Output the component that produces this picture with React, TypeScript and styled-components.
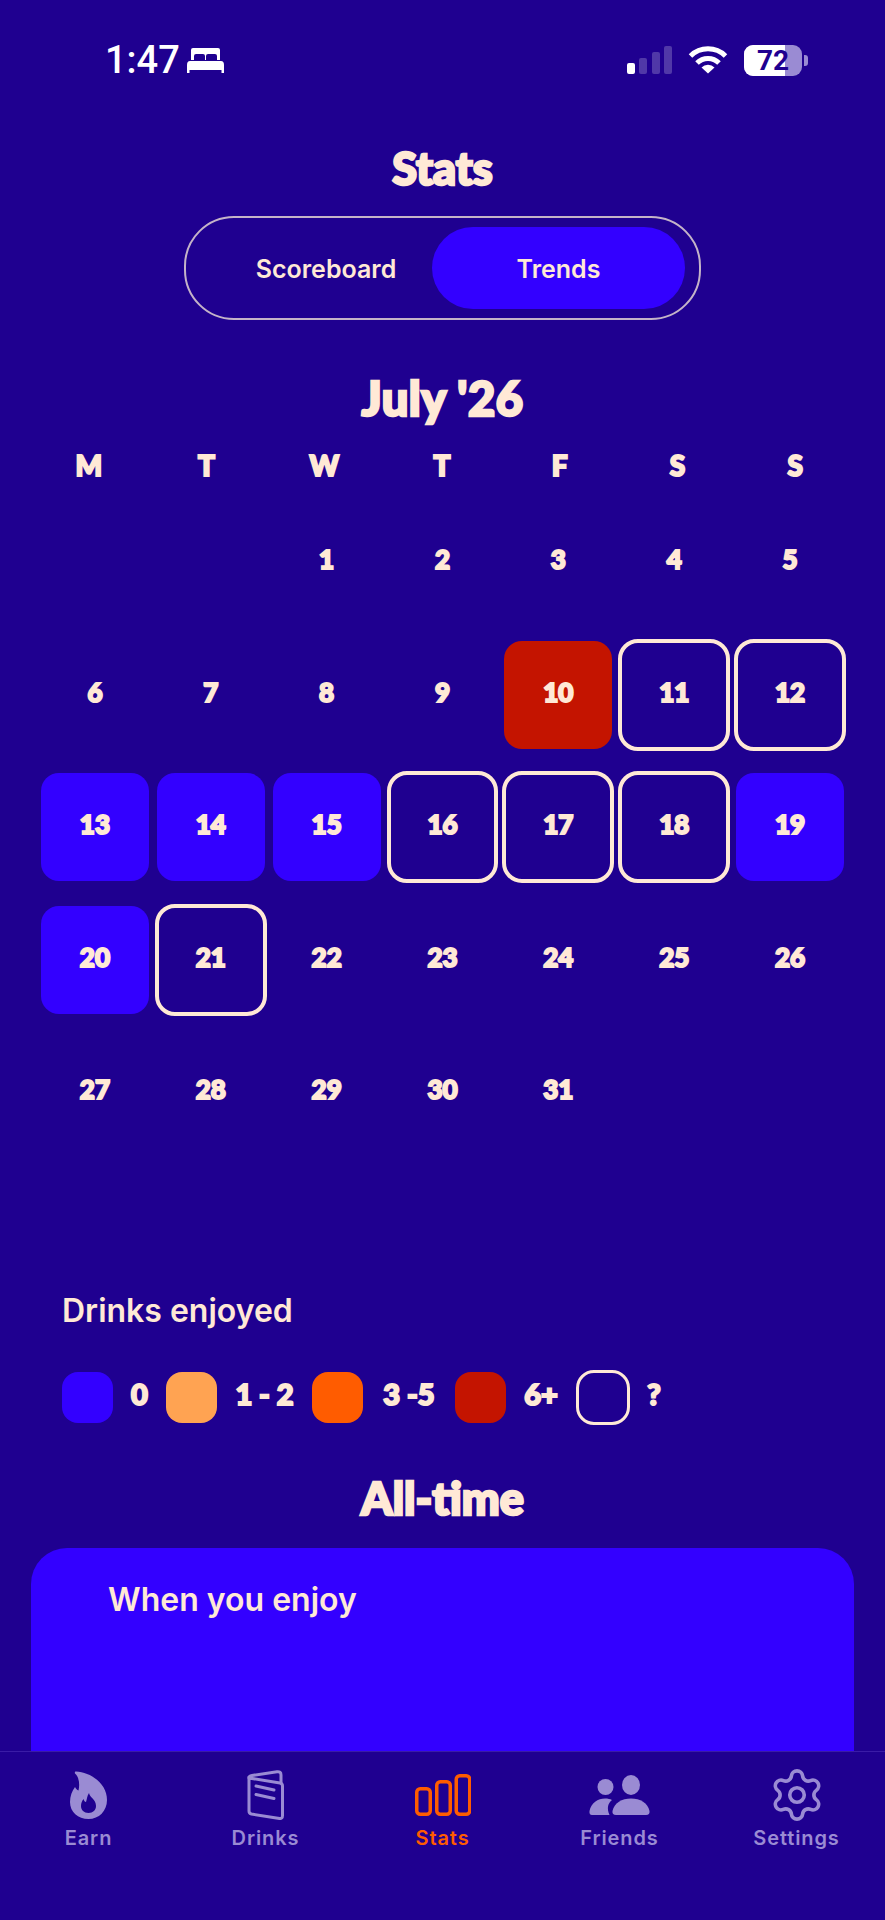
import { Fragment } from 'react';
import styled, { createGlobalStyle, css } from 'styled-components';
import { Settings } from 'lucide-react';

const NAVY = '#1f0090';
const BLUE = '#3300ff';
const CREAM = '#ffe9d6';
const MUTED = '#9a8bd3';
const ORANGE = '#ff5c00';

const GlobalStyle = createGlobalStyle`
  html, body {
    margin: 0;
    padding: 0;
    background: ${NAVY};
  }
  * {
    box-sizing: border-box;
  }
`;

const chunky = css`
  font-family: 'Lato', 'Liberation Sans', sans-serif;
  font-weight: 900;
  color: ${CREAM};
  -webkit-text-stroke: 2.5px ${CREAM};
`;

const Screen = styled.div`
  width: 885px;
  height: 1920px;
  display: flex;
  flex-direction: column;
  overflow: hidden;
  background: ${NAVY};
`;

const Main = styled.main`
  flex: 1;
  min-height: 0;
  overflow: hidden;
`;

const StatusBar = styled.div`
  height: 120px;
  padding: 44px 77px 0 105px;
  display: flex;
  justify-content: space-between;
  align-items: flex-start;
`;

const StatusGroup = styled.div`
  display: flex;
  align-items: center;
  height: 32px;
`;

const Clock = styled.span`
  font-family: 'Roboto', sans-serif;
  font-weight: 500;
  font-size: 38px;
  line-height: 32px;
  color: #fff;
  margin-right: 7px;
`;

const SignalBars = styled.div`
  display: flex;
  align-items: flex-end;
  gap: 4.5px;
  height: 28px;
  margin-right: 16px;
`;

const SignalBar = styled.span<{ $h: number; $on?: boolean }>`
  width: 8px;
  height: ${(p) => p.$h}px;
  border-radius: 2px;
  background: ${(p) => (p.$on ? '#fff' : 'rgba(255,255,255,0.22)')};
`;

const Battery = styled.div`
  position: relative;
  width: 58px;
  height: 31px;
  margin-left: 16px;
  border-radius: 9px;
  overflow: hidden;
  background: ${MUTED};
`;

const BatteryFill = styled.div`
  height: 100%;
  background: #fff;
`;

const BatteryText = styled.span`
  position: absolute;
  inset: 0;
  display: flex;
  align-items: center;
  justify-content: center;
  font-family: 'Roboto', sans-serif;
  font-weight: 700;
  font-size: 28px;
  color: ${NAVY};
`;

const BatteryTip = styled.span`
  width: 4px;
  height: 11px;
  margin-left: 2px;
  border-radius: 0 3px 3px 0;
  background: ${MUTED};
`;

const Title = styled.h1<{ $size?: number }>`
  ${chunky};
  margin: 24px 0 0;
  height: 48px;
  line-height: 48px;
  font-size: ${(p) => p.$size ?? 45}px;
  text-align: center;
`;

const Toggle = styled.div`
  width: 517px;
  height: 104px;
  margin: 24px auto 0;
  padding: 9px 14px 9px 34px;
  display: flex;
  border: 2px solid #c4b3c8;
  border-radius: 50px;
`;

const Segment = styled.div<{ $active?: boolean }>`
  display: flex;
  align-items: center;
  justify-content: center;
  flex: ${(p) => (p.$active ? '0 0 253px' : '1')};
  padding-top: 1px;
  border-radius: 41px;
  background: ${(p) => (p.$active ? BLUE : 'transparent')};
  font-family: 'Inter', sans-serif;
  font-weight: 600;
  font-size: 25px;
  color: ${CREAM};
`;

const MonthTitle = styled(Title)`
  margin-top: 54px;
  letter-spacing: 0.5px;
`;

const Weekdays = styled.div`
  display: grid;
  grid-template-columns: repeat(7, 1fr);
  margin: 27px 31px 27px 30px;
`;

const Weekday = styled.span`
  ${chunky};
  -webkit-text-stroke-width: 2px;
  font-size: 28px;
  line-height: 32px;
  text-align: center;
`;

const DayGrid = styled.div`
  display: grid;
  grid-template-columns: repeat(7, 1fr);
  grid-auto-rows: 108px;
  column-gap: 8px;
  row-gap: 24.6px;
  padding: 0 41px;
`;

type DayKind = 'none' | 'zero' | 'high' | 'unknown';

const Day = styled.div<{ $kind: DayKind }>`
  ${chunky};
  -webkit-text-stroke-width: 2px;
  display: flex;
  align-items: center;
  justify-content: center;
  padding-bottom: 6px;
  font-size: 26px;
  border-radius: 18px;
  background: ${(p) =>
    p.$kind === 'zero' ? BLUE : p.$kind === 'high' ? '#c41400' : 'transparent'};
  ${(p) =>
    p.$kind === 'unknown' &&
    css`
      margin: -2px;
      border: 4px solid ${CREAM};
      border-radius: 20px;
    `}
`;

const SectionLabel = styled.h2`
  margin: 145px 0 0 62px;
  font-family: 'Inter', sans-serif;
  font-weight: 600;
  font-size: 32px;
  line-height: 40px;
  color: ${CREAM};
`;

const Legend = styled.div`
  display: flex;
  align-items: center;
  height: 51px;
  margin: 41px 0 0 62px;
`;

const Swatch = styled.span<{ $color?: string }>`
  flex: none;
  width: 51px;
  height: 51px;
  border-radius: 16px;
  background: ${(p) => p.$color ?? 'transparent'};
  ${(p) =>
    !p.$color &&
    css`
      width: 54px;
      height: 55px;
      border: 3px solid ${CREAM};
      border-radius: 18px;
    `}
`;

const LegendText = styled.span<{ $w: number }>`
  ${chunky};
  -webkit-text-stroke-width: 2px;
  width: ${(p) => p.$w}px;
  margin: 0 17px;
  padding-bottom: 8px;
  font-size: 29px;
  white-space: nowrap;
  text-align: center;
`;

const AllTimeTitle = styled(Title)`
  margin-top: 51px;
`;

const Card = styled.section`
  height: 400px;
  margin: 26px 31px 0;
  padding: 32px 77px;
  border-radius: 36px 36px 0 0;
  background: ${BLUE};
`;

const CardTitle = styled.h3`
  margin: 0;
  font-family: 'Inter', sans-serif;
  font-weight: 600;
  font-size: 32px;
  line-height: 40px;
  color: ${CREAM};
`;

const TabBar = styled.nav`
  flex: none;
  height: 169px;
  padding-top: 18px;
  display: flex;
  align-items: flex-start;
  border-top: 1px solid #3a1ca6;
`;

const Tab = styled.div<{ $active?: boolean }>`
  flex: 1;
  display: flex;
  flex-direction: column;
  align-items: center;
  gap: 6px;
  color: ${(p) => (p.$active ? ORANGE : MUTED)};
`;

const TabIcon = styled.div`
  height: 50px;
  display: flex;
  align-items: center;
  justify-content: center;
`;

const TabLabel = styled.span`
  font-family: 'Inter', sans-serif;
  font-weight: 600;
  font-size: 20px;
  line-height: 24px;
  letter-spacing: 0.9px;
`;

const BedIcon = () => (
  <svg width="37" height="25" viewBox="0 0 37 25" fill="#fff">
    <path d="M6 0H31Q33 0 33 2V12H30V8Q30 6 28 6H21Q19 6 19 8V12H18V8Q18 6 16 6H9Q7 6 7 8V12H4V2Q4 0 6 0Z" />
    <path d="M3 13H34Q37 13 37 17V25H34.5V22H2.5V25H0V17Q0 13 3 13Z" />
  </svg>
);

const WifiIcon = () => (
  <svg width="40" height="28" viewBox="0 0 40 28" fill="none" stroke="#fff" strokeWidth="5">
    <path d="M2.5 10A25 25 0 0 1 37.5 10" />
    <path d="M9 17A15.5 15.5 0 0 1 31 17" />
    <path d="M20 27.5L13.5 21.5A9 9 0 0 1 26.5 21.5Z" fill="#fff" stroke="none" />
  </svg>
);

const FlameIcon = () => (
  <svg width="37" height="48" viewBox="0 0 37 48" fill="currentColor">
    <path
      fillRule="evenodd"
      d="M6 .5C20 1 37 12 37 29 37 40 29 48 18.5 48 8 48 0 41 0 31 0 25 2 20 5 16 6 18 7 19 8.5 19.5 10 13 9 6 5 2.5 4.5 1.5 5 .5 6 .5ZM19 22C20 27 26 28 26 35 26 39 23 42 18.5 42 14 42 11 39 11 35 11 32 12 30 13.5 28 14 30 15 31 16 31 17 28 17 25 19 22Z"
    />
  </svg>
);

const MenuIcon = () => (
  <svg width="37" height="50" viewBox="0 0 37 50" fill="none" stroke="currentColor" strokeWidth="3" strokeLinecap="round">
    <path d="M2 8L33 13Q35.5 13.5 35.5 16V45.5Q35.5 49 32.5 48.5L4.5 44Q2 43.5 2 41Z" />
    <path d="M2 8Q2 6 5 5.5L30 1.7Q34 1.2 34 5V13" />
    <path d="M9 16L27 20M9 24.5L27 28.5" />
  </svg>
);

const BarsIcon = () => (
  <svg width="56" height="42" viewBox="0 0 56 42" fill="none" stroke="currentColor" strokeWidth="3.5">
    <rect x="1.75" y="14.75" width="13.5" height="25.5" rx="3.5" />
    <rect x="21.75" y="7.75" width="13.5" height="32.5" rx="3.5" />
    <rect x="41.25" y="1.75" width="13.5" height="38.5" rx="3.5" />
  </svg>
);

const FriendsIcon = () => (
  <svg width="61" height="40" viewBox="0 0 61 40" fill="currentColor">
    <circle cx="16.5" cy="12" r="8" />
    <ellipse cx="42" cy="10" rx="9" ry="10" />
    <path d="M27 40Q23 40 23.5 36C25 28 33 23.5 42 23.5 51 23.5 59 28 60.5 36Q61 40 57 40Z" />
    <path d="M3 40Q0 40 .5 36C2 28 9 23.5 16 23.5 19 23.5 21 24 23 25 19 28 17.5 33 20.5 40Z" />
  </svg>
);

const weekdays = ['M', 'T', 'W', 'T', 'F', 'S', 'S'];

const dayKinds: Record<number, DayKind> = {
  10: 'high',
  11: 'unknown',
  12: 'unknown',
  13: 'zero',
  14: 'zero',
  15: 'zero',
  16: 'unknown',
  17: 'unknown',
  18: 'unknown',
  19: 'zero',
  20: 'zero',
  21: 'unknown',
};

const legend = [
  { color: BLUE, label: '0', width: 19 },
  { color: '#ffa352', label: '1 - 2', width: 61 },
  { color: ORANGE, label: '3 -5', width: 58 },
  { color: '#c41400', label: '6+', width: 36 },
  { label: '?', width: 14 },
];

const tabs = [
  { label: 'Earn', icon: <FlameIcon /> },
  { label: 'Drinks', icon: <MenuIcon /> },
  { label: 'Stats', icon: <BarsIcon />, active: true },
  { label: 'Friends', icon: <FriendsIcon /> },
  { label: 'Settings', icon: <Settings size={58} strokeWidth={1.5} /> },
];

const App = () => {
  return (
    <Screen>
      <GlobalStyle />
      <Main>
        <StatusBar>
          <StatusGroup>
            <Clock>1:47</Clock>
            <BedIcon />
          </StatusGroup>
          <StatusGroup>
            <SignalBars>
              <SignalBar $h={11} $on />
              <SignalBar $h={16} />
              <SignalBar $h={22} />
              <SignalBar $h={28} />
            </SignalBars>
            <WifiIcon />
            <Battery>
              <BatteryFill style={{ width: '71%' }} />
              <BatteryText>72</BatteryText>
            </Battery>
            <BatteryTip />
          </StatusGroup>
        </StatusBar>

        <Title>Stats</Title>
        <Toggle>
          <Segment>Scoreboard</Segment>
          <Segment $active>Trends</Segment>
        </Toggle>

        <MonthTitle $size={47}>July '26</MonthTitle>
        <Weekdays>
          {weekdays.map((day, i) => (
            <Weekday key={i}>{day}</Weekday>
          ))}
        </Weekdays>
        <DayGrid>
          <span />
          <span />
          {Array.from({ length: 31 }, (_, i) => i + 1).map((day) => (
            <Day key={day} $kind={dayKinds[day] ?? 'none'}>
              {day}
            </Day>
          ))}
        </DayGrid>

        <SectionLabel>Drinks enjoyed</SectionLabel>
        <Legend>
          {legend.map((item) => (
            <Fragment key={item.label}>
              <Swatch $color={item.color} />
              <LegendText $w={item.width}>{item.label}</LegendText>
            </Fragment>
          ))}
        </Legend>

        <AllTimeTitle>All-time</AllTimeTitle>
        <Card>
          <CardTitle>When you enjoy</CardTitle>
        </Card>
      </Main>

      <TabBar>
        {tabs.map((tab) => (
          <Tab key={tab.label} $active={tab.active}>
            <TabIcon>{tab.icon}</TabIcon>
            <TabLabel>{tab.label}</TabLabel>
          </Tab>
        ))}
      </TabBar>
    </Screen>
  );
};

export default App;
